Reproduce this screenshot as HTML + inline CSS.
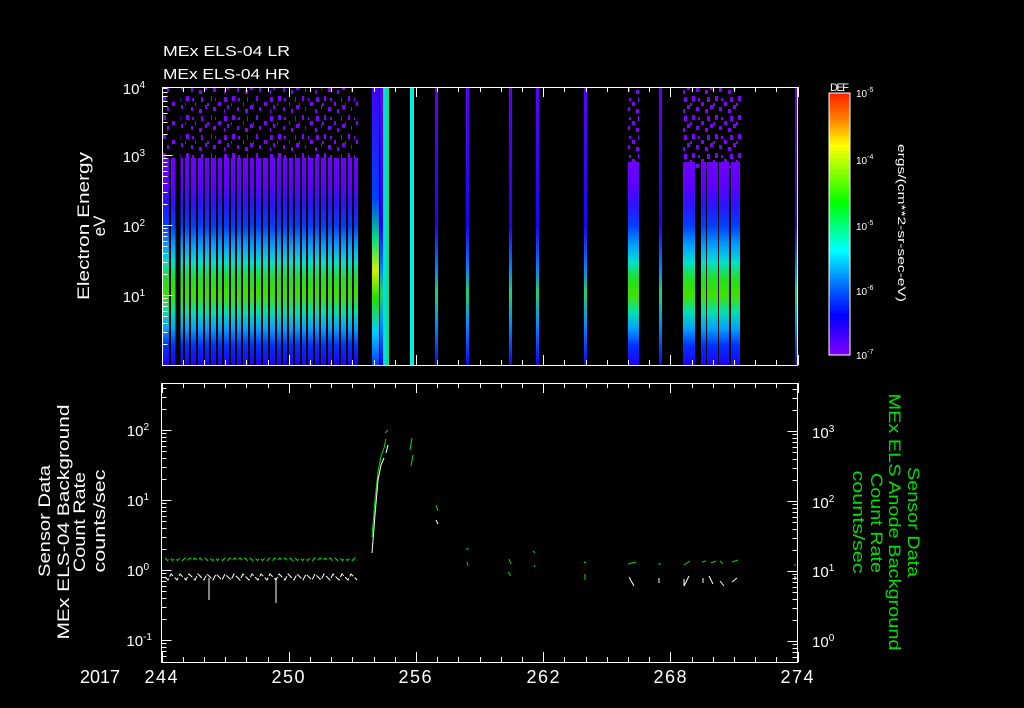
<!DOCTYPE html>
<html><head><meta charset="utf-8"><style>
html,body{margin:0;padding:0;background:#000;width:1024px;height:708px;overflow:hidden}
svg{display:block}
text{font-family:"Liberation Sans","DejaVu Sans",sans-serif;fill:#fff}
</style></head><body>
<svg id="s" width="1024" height="708" viewBox="0 0 1024 708" xmlns="http://www.w3.org/2000/svg">
<defs>
<linearGradient id="g" gradientUnits="userSpaceOnUse" x1="0" y1="87" x2="0" y2="365">
<stop offset="0" stop-color="#7000ff"/>
<stop offset="0.255" stop-color="#7000ff"/>
<stop offset="0.35" stop-color="#6000ff"/>
<stop offset="0.42" stop-color="#3010ff"/>
<stop offset="0.5" stop-color="#0040ff"/>
<stop offset="0.57" stop-color="#00a0ff"/>
<stop offset="0.63" stop-color="#00e0d0"/>
<stop offset="0.69" stop-color="#20e020"/>
<stop offset="0.75" stop-color="#40e000"/>
<stop offset="0.81" stop-color="#00e0b0"/>
<stop offset="0.87" stop-color="#00a0ff"/>
<stop offset="0.93" stop-color="#0030ff"/>
<stop offset="1" stop-color="#2000ff"/>
</linearGradient>
<linearGradient id="gb" gradientUnits="userSpaceOnUse" x1="0" y1="87" x2="0" y2="365">
<stop offset="0" stop-color="#6000ff"/>
<stop offset="0.5" stop-color="#2000ff"/>
<stop offset="0.65" stop-color="#0080ff"/>
<stop offset="0.74" stop-color="#20d070"/>
<stop offset="0.85" stop-color="#0090ff"/>
<stop offset="1" stop-color="#1000ff"/>
</linearGradient>
<linearGradient id="gy" gradientUnits="userSpaceOnUse" x1="0" y1="87" x2="0" y2="365">
<stop offset="0" stop-color="#4000ff"/>
<stop offset="0.4" stop-color="#0040ff"/>
<stop offset="0.55" stop-color="#00e080"/>
<stop offset="0.66" stop-color="#d0f000"/>
<stop offset="0.76" stop-color="#20e000"/>
<stop offset="0.88" stop-color="#00d0ff"/>
<stop offset="1" stop-color="#0040ff"/>
</linearGradient>
<linearGradient id="cb" x1="0" y1="0" x2="0" y2="1">
<stop offset="0" stop-color="#ff2000"/>
<stop offset="0.1" stop-color="#ff8000"/>
<stop offset="0.2" stop-color="#ffff00"/>
<stop offset="0.27" stop-color="#b0ff00"/>
<stop offset="0.42" stop-color="#00ff00"/>
<stop offset="0.6" stop-color="#00ffff"/>
<stop offset="0.78" stop-color="#0040ff"/>
<stop offset="0.85" stop-color="#0000ff"/>
<stop offset="1" stop-color="#8000ff"/>
</linearGradient>
<pattern id="sp" width="23" height="19" patternUnits="userSpaceOnUse">
<rect x="2" y="1" width="3" height="5" fill="#7f00ff"/>
<rect x="11" y="7" width="3" height="4" fill="#7f00ff"/>
<rect x="17" y="2" width="3" height="5" fill="#7f00ff"/>
<rect x="6" y="12" width="3" height="4" fill="#7f00ff"/>
<rect x="15" y="14" width="3" height="4" fill="#7f00ff"/>
<rect x="20" y="10" width="3" height="4" fill="#7f00ff"/>
<rect x="0" y="8" width="2" height="3" fill="#7f00ff"/>
<rect x="8" y="3" width="2" height="3" fill="#7f00ff"/>
</pattern>
</defs>
<g id="spec"></g>
<g id="ticks" stroke="#fff" stroke-width="1" fill="none"></g>
<rect x="162.5" y="87.5" width="635" height="278" fill="none" stroke="#fff"/>
<rect x="161.5" y="383.5" width="636" height="279" fill="none" stroke="#fff"/>
<rect x="829" y="93" width="21" height="262" fill="url(#cb)" stroke="#fff"/>
<g id="lines" fill="none" stroke-width="1"></g>

<text x="163" y="56" font-size="15" textLength="127" lengthAdjust="spacingAndGlyphs">MEx ELS-04 LR</text>
<text x="163" y="79" font-size="15" textLength="127" lengthAdjust="spacingAndGlyphs">MEx ELS-04 HR</text>

<g font-size="15" text-anchor="end">
<text x="145" y="94">10<tspan font-size="10" dy="-6">4</tspan></text>
<text x="145" y="162">10<tspan font-size="10" dy="-6">3</tspan></text>
<text x="145" y="232">10<tspan font-size="10" dy="-6">2</tspan></text>
<text x="145" y="302">10<tspan font-size="10" dy="-6">1</tspan></text>
<text x="149" y="436">10<tspan font-size="10" dy="-6">2</tspan></text>
<text x="149" y="506">10<tspan font-size="10" dy="-6">1</tspan></text>
<text x="149" y="576">10<tspan font-size="10" dy="-6">0</tspan></text>
<text x="152" y="646">10<tspan font-size="10" dy="-6">-1</tspan></text>
</g>
<g font-size="15">
<text x="812" y="438">10<tspan font-size="10" dy="-6">3</tspan></text>
<text x="812" y="508">10<tspan font-size="10" dy="-6">2</tspan></text>
<text x="812" y="577">10<tspan font-size="10" dy="-6">1</tspan></text>
<text x="812" y="647">10<tspan font-size="10" dy="-6">0</tspan></text>
</g>
<g font-size="18" text-anchor="middle">
<text x="100" y="683" textLength="40">2017</text>
<text x="161" y="683" textLength="33">244</text>
<text x="288" y="683" textLength="33">250</text>
<text x="415" y="683" textLength="33">256</text>
<text x="543" y="683" textLength="33">262</text>
<text x="670" y="683" textLength="33">268</text>
<text x="797" y="683" textLength="33">274</text>
</g>
<g font-size="10">
<text x="830" y="91" font-size="11" textLength="19">DEF</text>
<text x="856" y="97">10<tspan font-size="7" dy="-5">-5</tspan></text>
<text x="856" y="164">10<tspan font-size="7" dy="-5">-4</tspan></text>
<text x="856" y="230">10<tspan font-size="7" dy="-5">-5</tspan></text>
<text x="856" y="295">10<tspan font-size="7" dy="-5">-6</tspan></text>
<text x="856" y="359">10<tspan font-size="7" dy="-5">-7</tspan></text>
</g>
<text transform="translate(898,223) rotate(90)" font-size="11" text-anchor="middle" textLength="158" lengthAdjust="spacingAndGlyphs">ergs/(cm**2-sr-sec-eV)</text>

<g font-size="17" text-anchor="middle">
<text transform="translate(89,226) rotate(-90)" textLength="148" lengthAdjust="spacingAndGlyphs">Electron Energy</text>
<text transform="translate(105,226) rotate(-90)">eV</text>
<text transform="translate(50,521) rotate(-90)" textLength="112" lengthAdjust="spacingAndGlyphs">Sensor Data</text>
<text transform="translate(69,522) rotate(-90)" textLength="235" lengthAdjust="spacingAndGlyphs">MEx ELS-04 Background</text>
<text transform="translate(85,522) rotate(-90)" textLength="100" lengthAdjust="spacingAndGlyphs">Count Rate</text>
<text transform="translate(105,521) rotate(-90)" textLength="103" lengthAdjust="spacingAndGlyphs">counts/sec</text>
</g>
<g font-size="17" text-anchor="middle">
<text transform="translate(908,522) rotate(90)" style="fill:#00e000" textLength="110" lengthAdjust="spacingAndGlyphs">Sensor Data</text>
<text transform="translate(889,522) rotate(90)" style="fill:#00e000" textLength="257" lengthAdjust="spacingAndGlyphs">MEx ELS Anode Background</text>
<text transform="translate(871,523) rotate(90)" style="fill:#00e000" textLength="100" lengthAdjust="spacingAndGlyphs">Count Rate</text>
<text transform="translate(853,522) rotate(90)" style="fill:#00e000" textLength="103" lengthAdjust="spacingAndGlyphs">counts/sec</text>
</g>
</svg>
<script>
var NS="http://www.w3.org/2000/svg";
function el(p,t,a){var e=document.createElementNS(NS,t);for(var k in a)e.setAttribute(k,a[k]);document.getElementById(p).appendChild(e);return e;}
el("spec","rect",{x:163,y:88,width:197,height:80,fill:"url(#sp)"});
el("spec","rect",{x:163,y:158,width:197,height:207,fill:"url(#g)"});
el("spec","rect",{x:683,y:88,width:58,height:80,fill:"url(#sp)"});
el("spec","rect",{x:628,y:88,width:11,height:80,fill:"url(#sp)"});
var gaps=[169,175.5,176.5,177.5,178.5,183,189,196,203,209,216,222,229,235,241,248,254,261,268,275,281,287,293,300,306,313,319,326,332,339,346,352,358];
gaps.forEach(function(x){el("spec","rect",{x:x,y:88,width:2,height:277,fill:"#000"});});
var cols=[[372,7,"url(#gy)"],[380,3,"url(#gb)"],[383,3,"#00e0e0"],[386,3,"#00e0a0"],[410,4,"#00f0e0"],[435,3,"url(#gb)"],[466,3,"url(#gb)"],[509,3,"url(#gb)"],[536,3,"url(#gb)"],[584,3,"url(#gb)"],[628,11,"url(#g)"],[659,3,"url(#gb)"],[683,12,"url(#g)"],[701,5,"url(#g)"],[707,11,"url(#g)"],[719,10,"url(#g)"],[731,9,"url(#g)"],[795,2,"url(#gb)"]];
cols.forEach(function(c){var isg=c[2]=="url(#g)";el("spec","rect",{x:c[0],y:(isg?162:88),width:c[1],height:(isg?203:277),fill:c[2]});});
var d="";
function hx(x0,x1,y){d+="M"+x0+" "+y+"H"+x1;}
function vy(x,y0,y1){d+="M"+x+" "+y0+"V"+y1;}
var L=[0,0.301,0.477,0.602,0.699,0.778,0.845,0.903,0.954];
function logAxis(x,dir,base,top,bot){for(var dd=-3;dd<6;dd++){for(var k=0;k<9;k++){var y=base-70*(dd+L[k]);if(y<top||y>bot)continue;y=Math.round(y)+0.5;hx(x,x+dir*(k==0?10:5),y);}}}
logAxis(162.5,1,365,88,364);
logAxis(161.5,1,710,384,661);
logAxis(797.5,-1,711,384,661);
for(var i=0;i<=30;i++){var x=Math.round(161.5+i*21.2)+0.5;var m=(i%6==0)?10:5;vy(x,87,87+m);vy(x,365,365-m);vy(x,383,383+m);vy(x,662,662-m);}
for(var j=0;j<4;j++){var b=355-j*65.5;for(var k=1;k<9;k++){var y=Math.round(b-65.5*L[k])+0.5;hx(850,846,y);}}
el("ticks","path",{d:d});
var green="#00e000";
var gl="",wl="";
for(var x=165;x<360;x+=2.5){var y=560+((x*7)%5)-2;gl+=(x==165?"M":"L")+x+" "+y.toFixed(1);}
for(var x=165;x<360;x+=3){var y=577+((x*13)%9)-3;wl+=(x==165?"M":"L")+x+" "+y.toFixed(1);}
el("lines","path",{d:gl,stroke:green,"stroke-dasharray":"5 3"});
el("lines","path",{d:wl,stroke:"#fff","stroke-dasharray":"6 2"});
el("lines","path",{d:"M209 578V600M276 578V603",stroke:"#fff"});
el("lines","path",{d:"M372 537L375 500L378 472L381 456L384 448L386 439M385 433L388 430",stroke:green});
el("lines","path",{d:"M372 553L375 515L378 480L381 465L384 458M386 453L388 445",stroke:"#fff"});
el("lines","path",{d:"M410 450L412 438M411 466L413 455",stroke:green});
el("lines","path",{d:"M436 505L438 511",stroke:green});
el("lines","path",{d:"M436 520L438 524",stroke:"#fff"});
el("lines","path",{d:"M466 549H469M509 559L511 564M533 551L535 553M584 562L586 563",stroke:green});
el("lines","path",{d:"M467 562L468 566M508 572L511 576M534 565L535 567M585 574V580M628 564L636 562M658 564H661M684 565L690 561M702 562L706 561M711 563L716 561M720 561L723 564M732 562L738 560M795 566V564",stroke:green});
el("lines","path",{d:"M629 577L634 586M659 578V583M684 579V586L689 576M703 578V583M709 576L713 584M720 581L724 586M732 582L737 578M795 576V580",stroke:"#fff"});
</script>
</body></html>
